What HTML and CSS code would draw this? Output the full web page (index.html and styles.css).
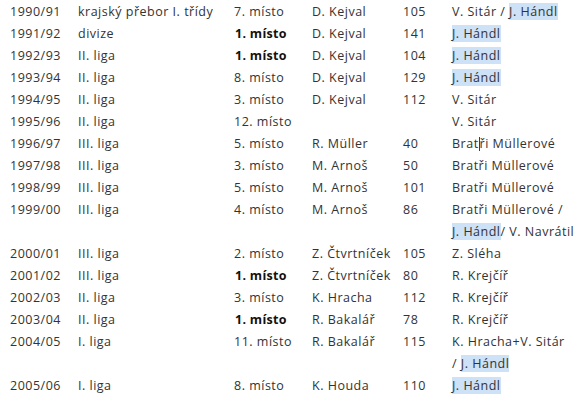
FILE: index.html
```html
<!DOCTYPE html>
<html lang="cs">
<head>
<meta charset="utf-8">
<link rel="stylesheet" href="styles.css">
</head>
<body>
<table class="history">
  <colgroup>
    <col class="c-year"><col class="c-league"><col class="c-place"><col class="c-coach"><col class="c-goals"><col class="c-scorer">
  </colgroup>
  <tr><td>1990/91</td><td>krajský přebor I. třídy</td><td>7. místo</td><td>D. Kejval</td><td>105</td><td>V. Sitár / <span class="hl">J. Hándl</span></td></tr>
  <tr><td>1991/92</td><td>divize</td><td><b>1. místo</b></td><td>D. Kejval</td><td>141</td><td><span class="hl">J. Hándl</span></td></tr>
  <tr><td>1992/93</td><td>II. liga</td><td><b>1. místo</b></td><td>D. Kejval</td><td>104</td><td><span class="hl">J. Hándl</span></td></tr>
  <tr><td>1993/94</td><td>II. liga</td><td>8. místo</td><td>D. Kejval</td><td>129</td><td><span class="hl">J. Hándl</span></td></tr>
  <tr><td>1994/95</td><td>II. liga</td><td>3. místo</td><td>D. Kejval</td><td>112</td><td>V. Sitár</td></tr>
  <tr><td>1995/96</td><td>II. liga</td><td>12. místo</td><td></td><td></td><td>V. Sitár</td></tr>
  <tr><td>1996/97</td><td>III. liga</td><td>5. místo</td><td>R. Müller</td><td>40</td><td>Brat<span class="caret"></span>ři Müllerové</td></tr>
  <tr><td>1997/98</td><td>III. liga</td><td>3. místo</td><td>M. Arnoš</td><td>50</td><td>Bratři Müllerové</td></tr>
  <tr><td>1998/99</td><td>III. liga</td><td>5. místo</td><td>M. Arnoš</td><td>101</td><td>Bratři Müllerové</td></tr>
  <tr><td>1999/00</td><td>III. liga</td><td>4. místo</td><td>M. Arnoš</td><td>86</td><td>Bratři Müllerové /<br><span class="hl">J. Hándl</span>/ V. Navrátil</td></tr>
  <tr><td>2000/01</td><td>III. liga</td><td>2. místo</td><td>Z. Čtvrtníček</td><td>105</td><td>Z. Sléha</td></tr>
  <tr><td>2001/02</td><td>III. liga</td><td><b>1. místo</b></td><td>Z. Čtvrtníček</td><td>80</td><td>R. Krejčíř</td></tr>
  <tr><td>2002/03</td><td>II. liga</td><td>3. místo</td><td>K. Hracha</td><td>112</td><td>R. Krejčíř</td></tr>
  <tr><td>2003/04</td><td>II. liga</td><td><b>1. místo</b></td><td>R. Bakalář</td><td>78</td><td>R. Krejčíř</td></tr>
  <tr><td>2004/05</td><td>I. liga</td><td>11. místo</td><td>R. Bakalář</td><td>115</td><td>K. Hracha+V. Sitár<br>/ <span class="hl">J. Hándl</span></td></tr>
  <tr><td>2005/06</td><td>I. liga</td><td>8. místo</td><td>K. Houda</td><td>110</td><td><span class="hl">J. Hándl</span></td></tr>
</table>
</body>
</html>
```

FILE: styles.css
```css
html, body {
  margin: 0;
  padding: 0;
  background: #ffffff;
}
body {
  font-family: "Open Sans", "DejaVu Sans", sans-serif;
  font-size: 12.5px;
  letter-spacing: 0.5px;
  color: #333333;
}
.history {
  border-collapse: collapse;
  table-layout: fixed;
  margin: 1px 0 0 10px;
}
.history td {
  padding: 0;
  line-height: 22px;
  vertical-align: top;
  white-space: nowrap;
  text-align: left;
}
.c-year { width: 68px; }
.c-league { width: 156px; }
.c-place { width: 78px; }
.c-coach { width: 91px; }
.c-goals { width: 49px; }
.c-scorer { width: 130px; }
.history b {
  font-weight: 700;
  color: #111111;
  margin-left: 1px;
  letter-spacing: 0.3px;
}
.hl {
  background: #cde1f7;
}
.caret {
  display: inline-block;
  width: 0;
  height: 14px;
  border-left: 1px solid #1c3f94;
  vertical-align: -3px;
}
```
